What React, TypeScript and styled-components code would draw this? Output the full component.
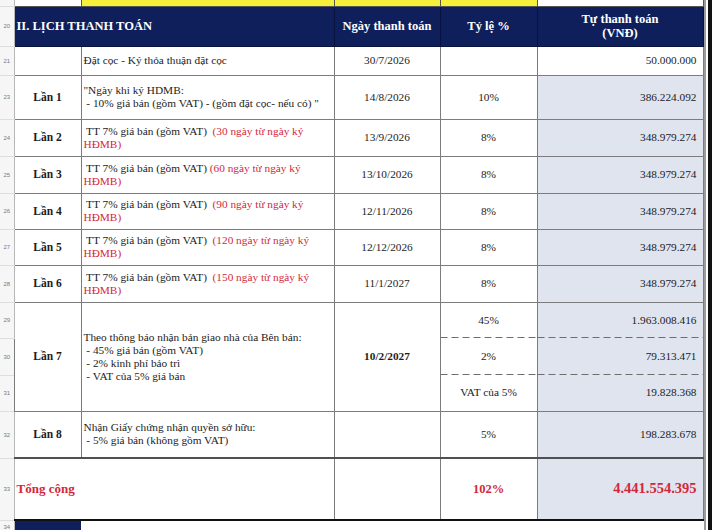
import React from "react";
import styled, { createGlobalStyle, css } from "styled-components";

/* ---------------- Global ---------------- */

const GlobalStyle = createGlobalStyle`
  html, body {
    margin: 0;
    padding: 0;
    background: #fff;
  }
  body {
    font-family: "Liberation Serif", "Times New Roman", serif;
    color: #1c1c1c;
  }
`;

const NAVY = "#0e1f5b";
const SHADE = "#dfe4ee";
const RED = "#d3283a";
const GRID = "#7c7c7c";

/* ---------------- Page ---------------- */

const Page = styled.div`
  display: flex;
  width: 712px;
  height: 530px;
  overflow: hidden;
`;

const Sheet = styled.table`
  flex: none;
  width: 703px;
  table-layout: fixed;
  border-collapse: collapse;
`;

/* right edge of the captured window */
const Edge = styled.div`
  flex: none;
  width: 9px;
  display: flex;
  border-left: 2px solid #9c9c9c;
  box-sizing: border-box;

  &::after {
    content: "";
    margin-left: auto;
    width: 5px;
    background: #111;
  }
`;

const Row = styled.tr<{ $h: number }>`
  height: ${(p) => p.$h}px;
`;

/* ---------------- Row numbers ---------------- */

const RowNum = styled.th`
  padding: 0;
  background: #f6f6f6;
  border-right: 1px solid #b8b8b8;
  border-bottom: 1px solid #dedede;
  font-family: "Liberation Sans", Arial, sans-serif;
  font-size: 6px;
  font-weight: 400;
  color: #7a7a7a;
  text-align: center;
  vertical-align: middle;
  overflow: hidden;
`;

/* ---------------- Cells ---------------- */

type CellProps = {
  $align?: "left" | "center" | "right";
  $bg?: string;
  $bold?: boolean;
  $dashBottom?: boolean;
  $dashTop?: boolean;
  $heavyTop?: boolean;
};

const Cell = styled.td<CellProps>`
  padding: 0 ${(p) => (p.$align === "right" ? "6px" : "2px")} 0 2px;
  border: 1px solid ${GRID};
  background-color: ${(p) => p.$bg ?? "#fff"};
  font-size: 11.3px;
  line-height: 13px;
  font-weight: ${(p) => (p.$bold ? 700 : 400)};
  text-align: ${(p) => p.$align ?? "left"};
  vertical-align: middle;
  white-space: pre;
  overflow: hidden;

  ${(p) =>
    p.$dashBottom &&
    css`
      border-bottom-style: hidden;
      background-image: linear-gradient(to right, #6e6e6e 0 7px, transparent 7px 11px);
      background-size: 11px 1px;
      background-repeat: repeat-x;
      background-position: left bottom;
    `}
  ${(p) =>
    p.$dashTop &&
    css`
      border-top-style: hidden;
    `}
  ${(p) =>
    p.$heavyTop &&
    css`
      border-top: 2px solid #505050;
      border-bottom: 2px solid #111;
    `}
`;

const HeadCell = styled.th<{ $align?: "left" | "center" }>`
  padding: 0 2px;
  background: ${NAVY};
  border: 1px solid #07123d;
  border-top: 1px solid #222;
  color: #fff;
  font-size: 12.5px;
  line-height: 14px;
  font-weight: 700;
  text-align: ${(p) => p.$align ?? "center"};
  vertical-align: middle;
  white-space: nowrap;
`;

const TopCell = styled.td<{ $yellow?: boolean }>`
  padding: 0;
  background: ${(p) => (p.$yellow ? "#f6ef3c" : "#fff")};
  border: 1px solid #555;
  border-top: none;
`;

const Label = styled(Cell).attrs({ $align: "center" as const, $bold: true })`
  font-size: 11.5px;
`;

const Red = styled.span`
  color: ${RED};
`;

const Total = styled.span<{ $size: number }>`
  color: ${RED};
  font-weight: 700;
  font-size: ${(p) => p.$size}px;
`;

const Foot = styled.td<{ $navy?: boolean }>`
  padding: 0;
  background: ${(p) => (p.$navy ? NAVY : "#fff")};
  border: none;
  border-top: 2px solid #111;
`;

/* ---------------- Data ---------------- */

type Installment = {
  num: number;
  row: number;
  lead: string;
  note: string;
  date: string;
  h: number;
};

const installments: Installment[] = [
  { num: 2, row: 24, lead: " TT 7% giá bán (gồm VAT)  ", note: "(30 ngày từ ngày ký", date: "13/9/2026", h: 37 },
  { num: 3, row: 25, lead: " TT 7% giá bán (gồm VAT) ", note: "(60 ngày từ ngày ký", date: "13/10/2026", h: 37 },
  { num: 4, row: 26, lead: " TT 7% giá bán (gồm VAT)  ", note: "(90 ngày từ ngày ký", date: "12/11/2026", h: 36 },
  { num: 5, row: 27, lead: " TT 7% giá bán (gồm VAT)  ", note: "(120 ngày từ ngày ký", date: "12/12/2026", h: 36 },
  { num: 6, row: 28, lead: " TT 7% giá bán (gồm VAT)  ", note: "(150 ngày từ ngày ký", date: "11/1/2027", h: 37 },
];

/* ---------------- Component ---------------- */

const App: React.FC = () => (
  <>
    <GlobalStyle />
    <Page>
      <Sheet>
        <colgroup>
          <col style={{ width: 14 }} />
          <col style={{ width: 67 }} />
          <col style={{ width: 253 }} />
          <col style={{ width: 106 }} />
          <col style={{ width: 97 }} />
          <col style={{ width: 166 }} />
        </colgroup>
        <tbody>
          <Row $h={6}>
            <RowNum />
            <TopCell />
            <TopCell $yellow />
            <TopCell $yellow />
            <TopCell $yellow />
            <TopCell />
          </Row>

          <Row $h={40}>
            <RowNum>20</RowNum>
            <HeadCell colSpan={2} $align="left">
              II. LỊCH THANH TOÁN
            </HeadCell>
            <HeadCell>Ngày thanh toán</HeadCell>
            <HeadCell>Tỷ lệ %</HeadCell>
            <HeadCell>
              Tự thanh toán
              <br />
              (VNĐ)
            </HeadCell>
          </Row>

          <Row $h={29}>
            <RowNum>21</RowNum>
            <Cell />
            <Cell>Đặt cọc - Ký thỏa thuận đặt cọc</Cell>
            <Cell $align="center">30/7/2026</Cell>
            <Cell />
            <Cell $align="right">50.000.000</Cell>
          </Row>

          <Row $h={44}>
            <RowNum>23</RowNum>
            <Label>Lần 1</Label>
            <Cell>
              {"\"Ngày khi ký HDMB:\n - 10% giá bán (gồm VAT) - (gồm đặt cọc- nếu có) \""}
            </Cell>
            <Cell $align="center">14/8/2026</Cell>
            <Cell $align="center">10%</Cell>
            <Cell $align="right" $bg={SHADE}>
              386.224.092
            </Cell>
          </Row>

          {installments.map((it) => (
            <Row key={it.num} $h={it.h}>
              <RowNum>{it.row}</RowNum>
              <Label>Lần {it.num}</Label>
              <Cell>
                {it.lead}
                <Red>
                  {it.note}
                  {"\nHĐMB)"}
                </Red>
              </Cell>
              <Cell $align="center">{it.date}</Cell>
              <Cell $align="center">8%</Cell>
              <Cell $align="right" $bg={SHADE}>
                348.979.274
              </Cell>
            </Row>
          ))}

          <Row $h={36}>
            <RowNum>29</RowNum>
            <Label rowSpan={3}>Lần 7</Label>
            <Cell rowSpan={3}>
              {"Theo thông báo nhận bản giao nhà của Bên bán:\n - 45% giá bán (gồm VAT)\n - 2% kinh phí bảo trì\n - VAT của 5% giá bán"}
            </Cell>
            <Cell rowSpan={3} $align="center" $bold>
              10/2/2027
            </Cell>
            <Cell $align="center" $dashBottom>
              45%
            </Cell>
            <Cell $align="right" $bg={SHADE} $dashBottom>
              1.963.008.416
            </Cell>
          </Row>
          <Row $h={37}>
            <RowNum>30</RowNum>
            <Cell $align="center" $dashTop $dashBottom>
              2%
            </Cell>
            <Cell $align="right" $bg={SHADE} $dashTop $dashBottom>
              79.313.471
            </Cell>
          </Row>
          <Row $h={36}>
            <RowNum>31</RowNum>
            <Cell $align="center" $dashTop>
              VAT của 5%
            </Cell>
            <Cell $align="right" $bg={SHADE} $dashTop>
              19.828.368
            </Cell>
          </Row>

          <Row $h={47}>
            <RowNum>32</RowNum>
            <Label>Lần 8</Label>
            <Cell>{"Nhận Giấy chứng nhận quyền sở hữu:\n - 5% giá bán (không gồm VAT)"}</Cell>
            <Cell />
            <Cell $align="center">5%</Cell>
            <Cell $align="right" $bg={SHADE}>
              198.283.678
            </Cell>
          </Row>

          <Row $h={62}>
            <RowNum>33</RowNum>
            <Cell colSpan={2} $heavyTop>
              <Total $size={13}>Tổng cộng</Total>
            </Cell>
            <Cell $heavyTop />
            <Cell $align="center" $heavyTop>
              <Total $size={12.5}>102%</Total>
            </Cell>
            <Cell $align="right" $bg={SHADE} $heavyTop>
              <Total $size={14.5}>4.441.554.395</Total>
            </Cell>
          </Row>

          <Row $h={14}>
            <RowNum>34</RowNum>
            <Foot $navy />
            <Foot colSpan={4} />
          </Row>
        </tbody>
      </Sheet>
      <Edge />
    </Page>
  </>
);

export default App;
